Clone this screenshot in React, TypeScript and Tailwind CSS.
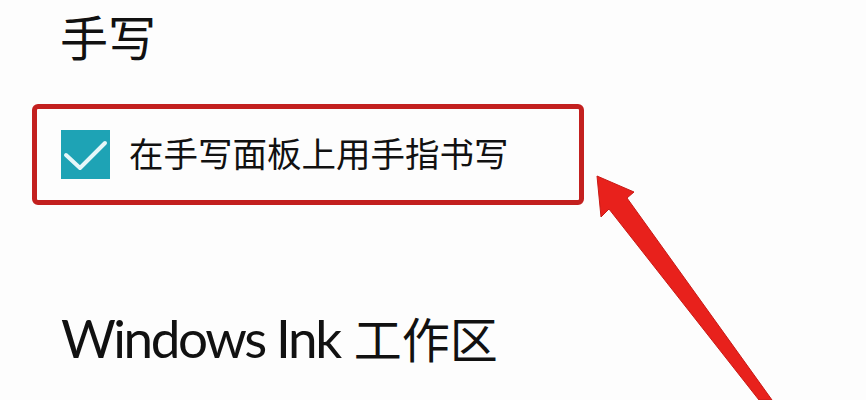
import React from 'react';

const CheckIcon: React.FC = () => (
  <svg width="49" height="49" viewBox="0 0 49 49" fill="none">
    <path d="M5 25 L19 38 L44 13" stroke="#e6f7f9" strokeWidth="4" strokeLinecap="round" strokeLinejoin="round" />
  </svg>
);

const Arrow: React.FC = () => (
  <svg className="absolute left-0 top-0 pointer-events-none" width="866" height="400" viewBox="0 0 866 400">
    <path
      d="M597 176 L634 192 L627 198 L772 400 L759 400 L609 209 L601 217 Z"
      fill="#e8211c"
      stroke="#c81a16"
      strokeWidth="1"
      strokeLinejoin="round"
    />
  </svg>
);

export default function App() {
  return (
    <div
      className="relative w-[866px] h-[400px] overflow-hidden bg-[#fdfdfd] text-[#111]"
      style={{ fontFamily: '"Noto Sans", "Noto Sans CJK SC", sans-serif' }}
    >
      <div className="flex flex-col">
        <h2 className="pl-[60px] pt-[14px] text-[48px] leading-none font-normal">手写</h2>

        <div className="ml-[32px] mt-[42px] w-[552px] h-[101px] border-[5px] border-[#c3201f] rounded-[6px] flex items-center pl-[24px] gap-[19px]">
          <div className="w-[49px] h-[49px] bg-[#1ea3b5] flex items-center justify-center">
            <CheckIcon />
          </div>
          <span className="text-[34.5px] leading-none">在手写面板上用手指书写</span>
        </div>

        <h2 className="pl-[61px] mt-[106px] leading-none font-normal flex items-baseline">
          <span className="text-[53px] tracking-[-2.4px]" style={{ fontFamily: 'Lato, "Noto Sans CJK SC", sans-serif' }}>
            Windows Ink
          </span>
          <span className="text-[48px] ml-[14px]" style={{ fontFamily: '"Noto Sans CJK SC", sans-serif' }}>
            工作区
          </span>
        </h2>
      </div>

      <Arrow />
    </div>
  );
}
